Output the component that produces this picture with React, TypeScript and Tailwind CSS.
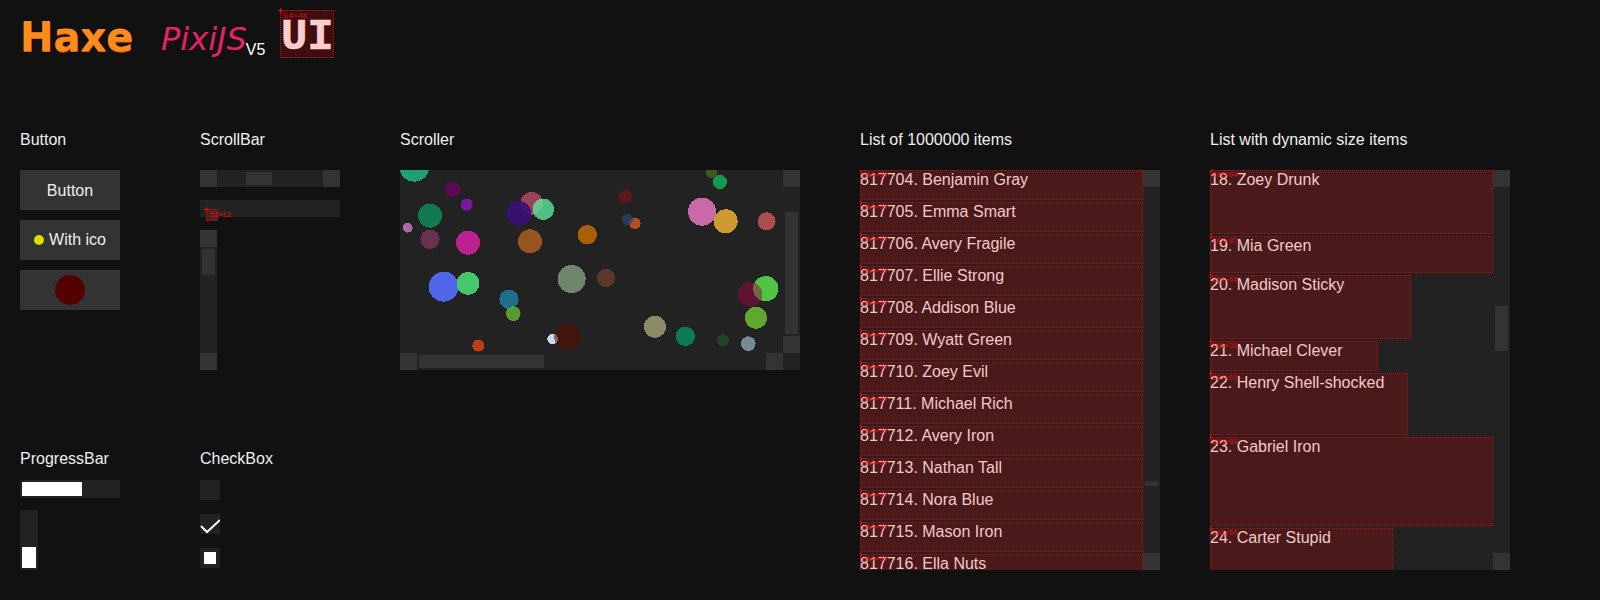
const balls = [
  [73, 20, 45, "#1fa06e", 1],
  [187, 88, 23, "#5c0a52", 1],
  [230, 134, 18, "#7a16a0", 1],
  [425, 130, 34, "#9b4158", 1],
  [387, 160, 37, "#3a0e79", 0.9],
  [460, 148, 32, "#5ee69f", 0.8],
  [120, 167, 36, "#117a52", 1],
  [53, 203, 15, "#b06aa8", 1],
  [120, 238, 29, "#6a3050", 1],
  [234, 248, 36, "#bc2190", 1],
  [420, 244, 36, "#96541f", 1],
  [592, 224, 29, "#a86000", 1],
  [706, 110, 20, "#5c1818", 1],
  [735, 190, 17, "#b4501e", 1],
  [712, 178, 17, "#2f446f", 0.7],
  [936, 155, 42, "#c96aa8", 1],
  [1007, 184, 36, "#cc9a30", 1],
  [1130, 184, 27, "#aa4d4d", 1],
  [965, 38, 17, "#3d5a1e", 1],
  [990, 66, 21, "#129a55", 1],
  [161, 380, 45, "#5065e8", 1],
  [234, 370, 34, "#45c76a", 1],
  [357, 418, 29, "#1f6e8c", 1],
  [370, 461, 22, "#64af35", 0.85],
  [545, 357, 42, "#6e866a", 1],
  [648, 354, 27, "#5c3828", 1],
  [1127, 386, 38, "#50c444", 1],
  [1080, 403, 37, "#9a0246", 0.5],
  [1098, 473, 33, "#5fa830", 1],
  [795, 500, 33, "#8a8a66", 1],
  [886, 529, 29, "#0c7a58", 1],
  [999, 541, 18, "#20412a", 1],
  [1075, 551, 22, "#768a94", 1],
  [488, 537, 16, "#c8d8e8", 1],
  [533, 530, 40, "#570b01", 0.6],
  [265, 557, 18, "#c03c14", 1],
] as const;

const names = [
  "Benjamin Gray",
  "Emma Smart",
  "Avery Fragile",
  "Ellie Strong",
  "Addison Blue",
  "Wyatt Green",
  "Zoey Evil",
  "Michael Rich",
  "Avery Iron",
  "Nathan Tall",
  "Nora Blue",
  "Mason Iron",
  "Ella Nuts",
];

const dynamicItems = [
  { label: "18. Zoey Drunk", w: "w-[283px]", h: "h-[64px]", size: "283×64" },
  { label: "19. Mia Green", w: "w-[283px]", h: "h-[37px]", size: "283×37" },
  { label: "20. Madison Sticky", w: "w-[201px]", h: "h-[64px]", size: "201×64" },
  { label: "21. Michael Clever", w: "w-[168px]", h: "h-[30px]", size: "168×30" },
  { label: "22. Henry Shell-shocked", w: "w-[198px]", h: "h-[62px]", size: "197×62" },
  { label: "23. Gabriel Iron", w: "w-[283px]", h: "h-[89px]", size: "283×89" },
  { label: "24. Carter Stupid", w: "w-[183px]", h: "h-[66px]", size: "183×66" },
];

function Plus() {
  return (
    <span className="absolute left-[-3px] top-[-3px] h-[5px] w-[5px]">
      <span className="absolute left-0 top-[2px] h-px w-[5px] bg-[#ff0000]" />
      <span className="absolute left-[2px] top-0 h-[5px] w-px bg-[#ff0000]" />
    </span>
  );
}

function SizeLabel({ text }: { text: string }) {
  return (
    <span className="absolute left-[1px] top-0 font-['Liberation_Mono'] text-[7px] leading-[8px] text-[#d81010]">
      {text}
    </span>
  );
}

function Row({ label, size, className }: { label: string; size: string; className: string }) {
  return (
    <div
      className={`relative shrink-0 border border-dotted border-[#b00f0f] bg-[#4a1a1a] text-[16px] leading-[18px] text-[#f2c9c9] ${className}`}
    >
      <span className="absolute left-[-1px] top-0 whitespace-nowrap">{label}</span>
      <Plus />
      <SizeLabel text={size} />
    </div>
  );
}

function Title({ children, className }: { children: React.ReactNode; className: string }) {
  return <h3 className={`h-[18px] text-[16px] leading-[18px] text-[#eeeeee] ${className}`}>{children}</h3>;
}

function Square() {
  return <div className="h-[17px] w-[17px] shrink-0 bg-[#333333]" />;
}

function ListScrollbar({ gap, size }: { gap: string; size: string }) {
  return (
    <div className="flex h-[400px] w-[17px] shrink-0 flex-col justify-between bg-[#222222]">
      <Square />
      <div className={`mx-[2px] w-[13px] flex-1 ${gap}`}>
        <div className={`bg-[#333333] ${size}`} />
      </div>
      <Square />
    </div>
  );
}

export default function App() {
  return (
    <div className="h-[600px] w-[1600px] overflow-hidden bg-[#111111] font-['Liberation_Sans',sans-serif]">
      {/* Logo */}
      <div className="flex h-[131px] items-start pl-[20px]">
        <span className="mt-[13px] w-[141px] font-['DejaVu_Sans'] text-[40px] font-bold leading-[48px] text-[#ff8c1a] [text-shadow:0_1px_0_#e85a20]">
          Haxe
        </span>
        <span className="mt-[19px] font-['DejaVu_Sans'] text-[32px] italic leading-[40px] text-[#e72264]">
          PixiJS
        </span>
        <span className="ml-[-1px] mt-[41px] text-[16px] leading-[18px] text-white">V5</span>
        <div className="relative ml-[15px] mt-[10px] flex h-[48px] w-[54px] items-center justify-center border border-dotted border-[#b00f0f] bg-[#3e0d0e] font-['Liberation_Mono'] text-[44px] font-bold leading-[48px] text-[#ffcccc] [-webkit-text-stroke:0.6px_#ffcccc]">
          <span className="mt-[6px]">UI</span>
          <Plus />
          <span className="absolute left-[2px] top-[1px] font-['Liberation_Mono'] text-[8px] font-normal leading-[8px] text-[#c81010] [-webkit-text-stroke:0]">
            54×48
          </span>
        </div>
      </div>

      <div className="flex">
        {/* Button + ProgressBar */}
        <div className="w-[200px] pl-[20px]">
          <Title className="mb-[21px]">Button</Title>
          <div className="flex w-[100px] flex-col gap-[10px] text-[16px] text-[#eeeeee]">
            <button className="flex h-[40px] items-center justify-center bg-[#333333] pt-px">Button</button>
            <button className="flex h-[40px] items-center justify-center gap-[5px] bg-[#333333]">
              <span className="h-[10px] w-[10px] rounded-full bg-[#dddd00]" />
              With ico
            </button>
            <button className="flex h-[40px] items-center justify-center bg-[#333333]">
              <span className="h-[30px] w-[30px] rounded-full bg-[#550000]" />
            </button>
          </div>
          <Title className="mb-[12px] mt-[140px]">ProgressBar</Title>
          <div className="h-[18px] w-[100px] bg-[#222222] p-[2px]">
            <div className="h-[14px] w-[60px] bg-white" />
          </div>
          <div className="mt-[12px] flex h-[60px] w-[18px] items-end bg-[#222222] p-[2px]">
            <div className="h-[21px] w-[14px] bg-white" />
          </div>
        </div>

        {/* ScrollBar + CheckBox */}
        <div className="w-[200px]">
          <Title className="mb-[21px]">ScrollBar</Title>
          <div className="flex h-[17px] w-[140px] justify-between bg-[#222222]">
            <Square />
            <div className="flex-1 pl-[29px] pt-[2px]">
              <div className="h-[13px] w-[26px] bg-[#333333]" />
            </div>
            <Square />
          </div>
          <div className="relative mt-[13px] h-[17px] w-[140px] bg-[#222222]">
            <div className="absolute left-[6px] top-[9px] h-[12px] w-[12px] border border-dotted border-[#b00f0f] bg-[#4f2020]">
              <Plus />
              <span className="absolute left-[3px] top-[1px] whitespace-nowrap font-['Liberation_Mono'] text-[7px] leading-[8px] text-[#f01010]">
                12×12
              </span>
            </div>
          </div>
          <div className="mt-[13px] flex h-[140px] w-[17px] flex-col justify-between bg-[#222222]">
            <Square />
            <div className="flex-1 px-[2px] pt-[2px]">
              <div className="h-[26px] w-[13px] bg-[#333333]" />
            </div>
            <Square />
          </div>
          <Title className="mb-[12px] mt-[80px]">CheckBox</Title>
          <div className="flex flex-col gap-[14px]">
            <div className="h-[20px] w-[20px] bg-[#222222]" />
            <div className="h-[20px] w-[20px] bg-[#222222]">
              <svg width="20" height="20" viewBox="0 0 20 20">
                <path d="M1 12 L7 18 L20 6" fill="none" stroke="#ffffff" strokeWidth="2" />
              </svg>
            </div>
            <div className="h-[20px] w-[20px] bg-[#222222] p-[4px]">
              <div className="h-[12px] w-[12px] bg-white" />
            </div>
          </div>
        </div>

        {/* Scroller */}
        <div className="w-[460px]">
          <Title className="mb-[21px]">Scroller</Title>
          <div className="flex h-[200px] w-[400px] flex-col bg-[#222222]">
            <div className="flex h-[183px]">
              <svg width="383" height="183" viewBox="30 30 1149 549" shapeRendering="crispEdges">
                {balls.map(([cx, cy, r, fill, opacity], i) => (
                  <circle key={i} cx={cx} cy={cy} r={r} fill={fill} fillOpacity={opacity} />
                ))}
              </svg>
              <div className="flex w-[17px] flex-col justify-between">
                <Square />
                <div className="flex-1 px-[2px] pt-[25px]">
                  <div className="h-[122px] w-[13px] bg-[#333333]" />
                </div>
                <Square />
              </div>
            </div>
            <div className="flex h-[17px] w-[383px] justify-between">
              <Square />
              <div className="flex-1 pl-[2px] pt-[2px]">
                <div className="h-[13px] w-[125px] bg-[#333333]" />
              </div>
              <Square />
            </div>
          </div>
        </div>

        {/* List of 1000000 items */}
        <div className="w-[350px]">
          <Title className="mb-[21px]">List of 1000000 items</Title>
          <div className="flex h-[400px] w-[300px] bg-[#222222]">
            <div className="flex w-[283px] flex-col gap-[2px] overflow-hidden">
              {names.map((name, i) => (
                <Row key={name} label={`${817704 + i}. ${name}`} size="284×30" className="h-[30px] w-[283px]" />
              ))}
            </div>
            <ListScrollbar gap="pt-[294px]" size="h-[5px]" />
          </div>
        </div>

        {/* List with dynamic size items */}
        <div className="w-[300px]">
          <Title className="mb-[21px]">List with dynamic size items</Title>
          <div className="flex h-[400px] w-[300px] bg-[#222222]">
            <div className="flex w-[283px] flex-col gap-[2px] overflow-hidden">
              {dynamicItems.map((item) => (
                <Row key={item.label} label={item.label} size={item.size} className={`${item.h} ${item.w}`} />
              ))}
            </div>
            <ListScrollbar gap="pt-[119px]" size="h-[45px]" />
          </div>
        </div>
      </div>
    </div>
  );
}
